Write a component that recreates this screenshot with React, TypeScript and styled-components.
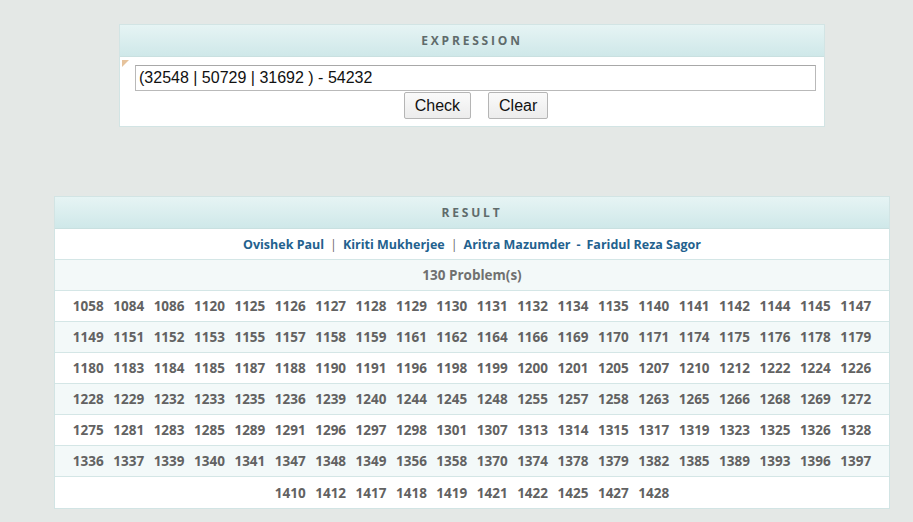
import React, { useState } from "react";
import styled, { createGlobalStyle } from "styled-components";

// Data
const problems = [
  [1058, 1084, 1086, 1120, 1125, 1126, 1127, 1128, 1129, 1130, 1131, 1132, 1134, 1135, 1140, 1141, 1142, 1144, 1145, 1147],
  [1149, 1151, 1152, 1153, 1155, 1157, 1158, 1159, 1161, 1162, 1164, 1166, 1169, 1170, 1171, 1174, 1175, 1176, 1178, 1179],
  [1180, 1183, 1184, 1185, 1187, 1188, 1190, 1191, 1196, 1198, 1199, 1200, 1201, 1205, 1207, 1210, 1212, 1222, 1224, 1226],
  [1228, 1229, 1232, 1233, 1235, 1236, 1239, 1240, 1244, 1245, 1248, 1255, 1257, 1258, 1263, 1265, 1266, 1268, 1269, 1272],
  [1275, 1281, 1283, 1285, 1289, 1291, 1296, 1297, 1298, 1301, 1307, 1313, 1314, 1315, 1317, 1319, 1323, 1325, 1326, 1328],
  [1336, 1337, 1339, 1340, 1341, 1347, 1348, 1349, 1356, 1358, 1370, 1374, 1378, 1379, 1382, 1385, 1389, 1393, 1396, 1397],
  [1410, 1412, 1417, 1418, 1419, 1421, 1422, 1425, 1427, 1428],
];

const authors = ["Ovishek Paul", "Kiriti Mukherjee", "Aritra Mazumder"];

function App() {
  const [expr, setExpr] = useState("(32548 | 50729 | 31692 ) - 54232");

  return (
    <>
      <GlobalStyle />
      <Page>
        <ExpressionPanel>
          <PanelHeader>Expression</PanelHeader>
          <InputRow>
            <Marker />
            <ExprInput value={expr} onChange={(e) => setExpr(e.target.value)} />
          </InputRow>
          <ButtonRow>
            <Button>Check</Button>
            <Button onClick={() => setExpr("")}>Clear</Button>
          </ButtonRow>
        </ExpressionPanel>

        <ResultPanel>
          <PanelHeader>Result</PanelHeader>
          <Row $alt={false} $size={12.5}>
            {authors.map((a, i) => (
              <React.Fragment key={a}>
                {i > 0 && <Sep>|</Sep>}
                <Author>{a}</Author>
              </React.Fragment>
            ))}
            <Author>-</Author>
            <Author>Faridul Reza Sagor</Author>
          </Row>
          <Row $alt>
            <Count>130 Problem(s)</Count>
          </Row>
          {problems.map((line, i) => (
            <Row key={i} $alt={i % 2 === 1} $gap={9.5}>
              {line.map((p) => (
                <Num key={p}>{p}</Num>
              ))}
            </Row>
          ))}
        </ResultPanel>
      </Page>
    </>
  );
}

export default App;

const GlobalStyle = createGlobalStyle`
  html, body {
    margin: 0;
    padding: 0;
    background: #e4e8e6;
  }
`;

const Page = styled.div`
  width: 836px;
  margin-left: 54px;
  padding-top: 24px;
  display: flex;
  flex-direction: column;
  align-items: center;
`;

const ExpressionPanel = styled.div`
  width: 706px;
  box-sizing: border-box;
  background: #ffffff;
  border: 1px solid #d2e4e4;
  padding-bottom: 7px;
`;

const PanelHeader = styled.div`
  height: 32px;
  box-sizing: border-box;
  border-bottom: 1px solid #c9e0e0;
  background: linear-gradient(to bottom, #e6f4f4 0%, #cfe8e9 100%);
  display: flex;
  align-items: center;
  justify-content: center;
  font-family: "Open Sans", sans-serif;
  font-weight: bold;
  font-size: 12px;
  letter-spacing: 2.8px;
  text-transform: uppercase;
  color: #5f6b6b;
`;

const InputRow = styled.div`
  position: relative;
  padding: 8px 8px 0 15px;
`;

const Marker = styled.span`
  position: absolute;
  left: 2px;
  top: 3px;
  width: 0;
  height: 0;
  border-top: 7px solid #e6c39c;
  border-right: 7px solid transparent;
`;

const ExprInput = styled.input`
  display: block;
  width: 681px;
  height: 26px;
  box-sizing: border-box;
  border: 1px solid #b9b9b9;
  border-top-color: #a8a8a8;
  padding: 0 3px;
  font-family: "Liberation Sans", Arial, sans-serif;
  font-size: 16px;
  color: #111;
  outline: none;
`;

const ButtonRow = styled.div`
  display: flex;
  justify-content: center;
  gap: 17px;
  padding-left: 8px;
  margin-top: 1px;
`;

const Button = styled.button`
  height: 27px;
  padding: 0 10px;
  font-family: "Liberation Sans", Arial, sans-serif;
  font-size: 16px;
  color: #111;
  background: linear-gradient(to bottom, #fafafa, #ececec);
  border: 1px solid #b5b5b5;
  border-radius: 2px;
  cursor: pointer;
`;

const ResultPanel = styled.div`
  width: 836px;
  box-sizing: border-box;
  margin-top: 69px;
  background: #ffffff;
  border: 1px solid #d2e4e4;
`;

const Row = styled.div<{ $alt: boolean; $gap?: number; $size?: number }>`
  height: 31px;
  box-sizing: border-box;
  border-bottom: 1px solid #d4e6e6;
  background: ${(p) => (p.$alt ? "#f3f9f9" : "#ffffff")};
  display: flex;
  align-items: center;
  justify-content: center;
  gap: ${(p) => p.$gap ?? 6}px;
  font-family: "Open Sans", sans-serif;
  font-weight: bold;
  font-size: ${(p) => p.$size ?? 13.5}px;
  &:last-child {
    border-bottom: none;
  }
`;

const Author = styled.a`
  color: #23618e;
  text-decoration: none;
  cursor: pointer;
`;

const Sep = styled.span`
  color: #6a6a6a;
  font-weight: normal;
`;

const Count = styled.span`
  color: #707070;
`;

const Num = styled.span`
  color: #626262;
`;
